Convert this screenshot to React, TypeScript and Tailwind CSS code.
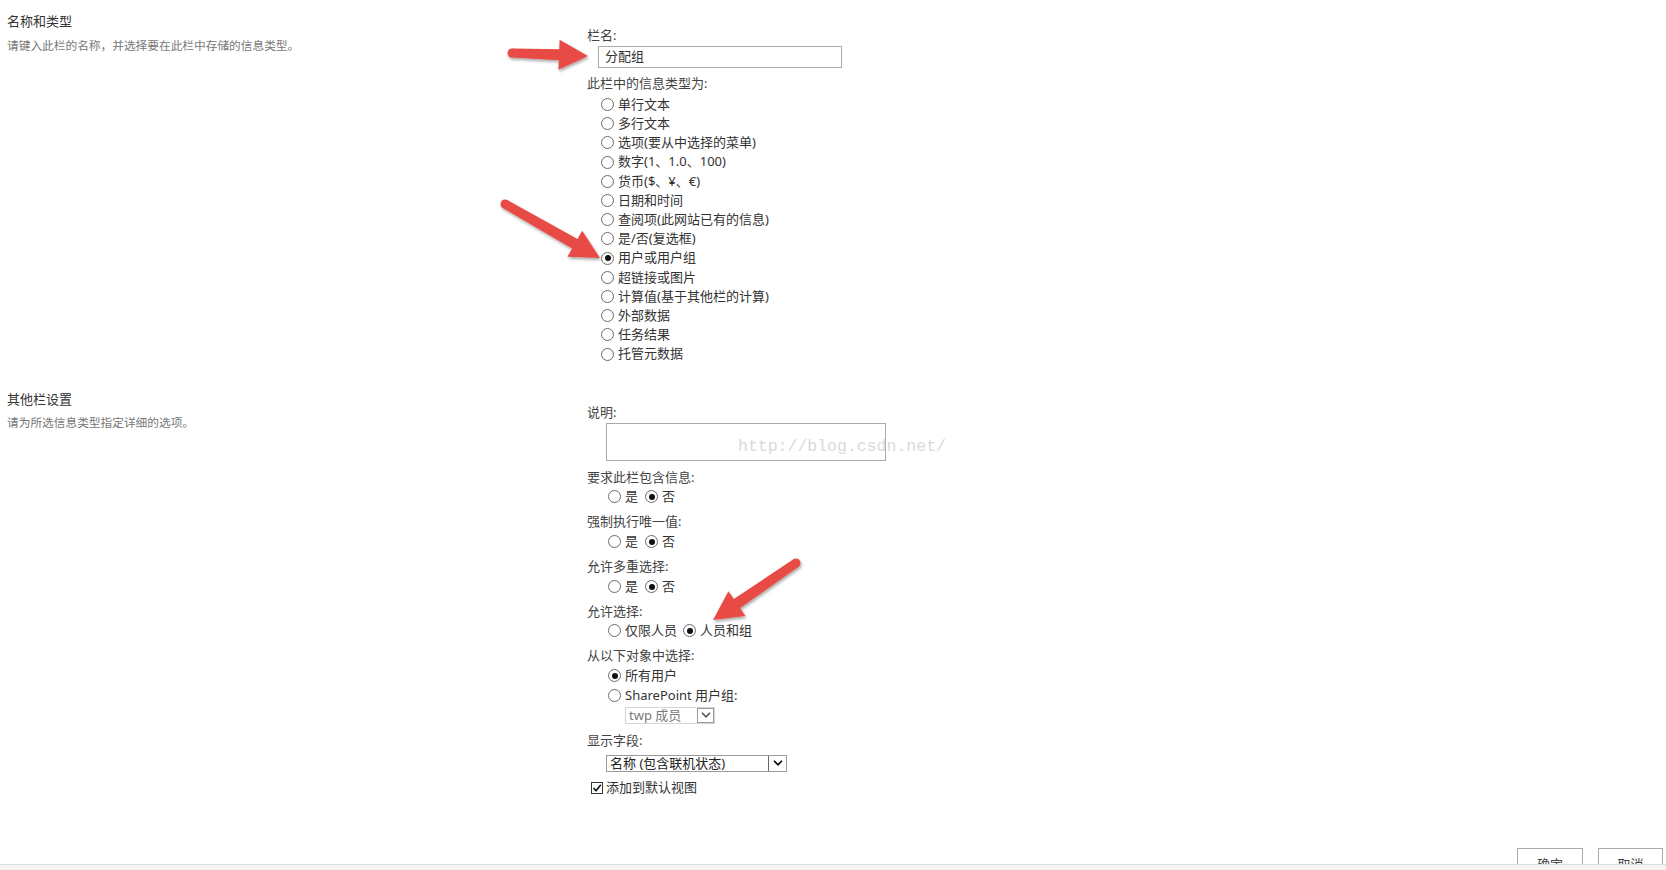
import React from 'react';

const fieldTypes: string[] = [
  '单行文本',
  '多行文本',
  '选项(要从中选择的菜单)',
  '数字(1、1.0、100)',
  '货币($、¥、€)',
  '日期和时间',
  '查阅项(此网站已有的信息)',
  '是/否(复选框)',
  '用户或用户组',
  '超链接或图片',
  '计算值(基于其他栏的计算)',
  '外部数据',
  '任务结果',
  '托管元数据',
];

const Radio = ({checked}: {checked?: boolean}) => (
  <span className="inline-flex h-[13px] w-[13px] shrink-0 items-center justify-center rounded-full border border-[#6b6b6b] bg-white">
    {checked && <span className="h-[6px] w-[6px] rounded-full bg-[#111]" />}
  </span>
);

const Choice = ({label, checked}: {label: string; checked?: boolean}) => (
  <span className="flex items-center gap-[4px]">
    <Radio checked={checked} />
    <span>{label}</span>
  </span>
);

const Chevron = ({color = '#000'}: {color?: string}) => (
  <svg width="10" height="6" viewBox="0 0 10 6">
    <polyline points="1,0.8 5,4.8 9,0.8" fill="none" stroke={color} strokeWidth="1.6" />
  </svg>
);

const Label = ({children, className = ''}: {children: React.ReactNode; className?: string}) => (
  <div className={`h-[18px] leading-[18px] text-[#444] ${className}`}>{children}</div>
);

// red call-out arrow, tail -> tip
const Arrow = ({x1, y1, x2, y2}: {x1: number; y1: number; x2: number; y2: number}) => {
  const len = Math.hypot(x2 - x1, y2 - y1);
  const ux = (x2 - x1) / len;
  const uy = (y2 - y1) / len;
  const px = -uy;
  const py = ux;
  const headL = 29;
  const headW = 15;
  const tailW = 4.5;
  const neckW = 5.5;
  const bx = x2 - ux * headL;
  const by = y2 - uy * headL;
  const pts = [
    [x1 + px * tailW, y1 + py * tailW],
    [bx + px * neckW, by + py * neckW],
    [bx + px * headW, by + py * headW],
    [x2, y2],
    [bx - px * headW, by - py * headW],
    [bx - px * neckW, by - py * neckW],
    [x1 - px * tailW, y1 - py * tailW],
  ]
    .map(p => p.join(','))
    .join(' ');
  return (
    <g filter="url(#arrowShadow)" fill="#e84b45">
      <circle cx={x1} cy={y1} r={tailW} />
      <polygon points={pts} />
    </g>
  );
};

const App = () => {
  return (
    <div className="flex h-[870px] w-[1666px] flex-col overflow-hidden bg-white text-[13px] text-[#333] font-['Noto_Sans','Noto_Sans_CJK_SC',sans-serif]">
      <div className="relative h-[864px] overflow-hidden">
        {/* 名称和类型 */}
        <section className="flex items-start">
          <div className="w-[587px] shrink-0 pl-[7px] pt-[11px]">
            <div className="h-[20px] leading-[20px] text-[#333]">名称和类型</div>
            <div className="mt-[5px] h-[18px] text-[11.7px] leading-[18px] text-[#777]">
              请键入此栏的名称，并选择要在此栏中存储的信息类型。
            </div>
          </div>
          <div className="pt-[26px]">
            <Label>栏名:</Label>
            <div className="ml-[11px] mt-[2px] flex h-[22px] w-[244px] items-center border border-[#ababab] pl-[6px] text-[13px] text-[#333]">
              分配组
            </div>
            <Label className="mt-[6px]">此栏中的信息类型为:</Label>
            <div className="mt-[3px] pl-[14px]">
              {fieldTypes.map(t => (
                <div key={t} className="flex h-[19.2px] items-center gap-[4px]">
                  <Radio checked={t === '用户或用户组'} />
                  <span>{t}</span>
                </div>
              ))}
            </div>
          </div>
        </section>

        {/* 其他栏设置 */}
        <section className="mt-[17px] flex items-start">
          <div className="w-[587px] shrink-0 pl-[7px] pt-[8px]">
            <div className="h-[20px] leading-[20px] text-[#333]">其他栏设置</div>
            <div className="mt-[4px] h-[18px] text-[11.7px] leading-[18px] text-[#777]">
              请为所选信息类型指定详细的选项。
            </div>
          </div>
          <div className="pt-[22px]">
            <Label>说明:</Label>
            <div className="ml-[19px] mt-[2px] h-[38px] w-[280px] border border-[#ababab]" />

            <Label className="mt-[7px]">要求此栏包含信息:</Label>
            <div className="mt-[1px] flex h-[20px] items-center gap-[7px] pl-[21px]">
              <Choice label="是" />
              <Choice label="否" checked />
            </div>

            <Label className="mt-[5px]">强制执行唯一值:</Label>
            <div className="mt-[2px] flex h-[20px] items-center gap-[7px] pl-[21px]">
              <Choice label="是" />
              <Choice label="否" checked />
            </div>

            <Label className="mt-[5px]">允许多重选择:</Label>
            <div className="mt-[2px] flex h-[20px] items-center gap-[7px] pl-[21px]">
              <Choice label="是" />
              <Choice label="否" checked />
            </div>

            <Label className="mt-[5px]">允许选择:</Label>
            <div className="mt-[1px] flex h-[20px] items-center gap-[6px] pl-[21px]">
              <Choice label="仅限人员" />
              <Choice label="人员和组" checked />
            </div>

            <Label className="mt-[5px]">从以下对象中选择:</Label>
            <div className="mt-[2px] flex h-[20px] items-center pl-[21px]">
              <Choice label="所有用户" checked />
            </div>
            <div className="flex h-[20px] items-center pl-[21px]">
              <Choice label="SharePoint 用户组:" />
            </div>
            <div className="ml-[38px] mt-[1px] flex h-[17px] w-[90px] border border-[#d4d4d4]">
              <span className="flex-1 pl-[3px] text-[13px] leading-[15px] text-[#7a7a7a]">twp 成员</span>
              <span className="flex w-[17px] items-center justify-center border border-[#9a9a9a] bg-white">
                <Chevron color="#555" />
              </span>
            </div>

            <Label className="mt-[7px]">显示字段:</Label>
            <div className="ml-[19px] mt-[6px] flex h-[17px] w-[181px] border border-[#9a9a9a]">
              <span className="flex-1 pl-[3px] leading-[15px] text-[#222]">名称 (包含联机状态)</span>
              <span className="flex w-[18px] items-center justify-center border-l border-[#6a6a6a] bg-white">
                <Chevron />
              </span>
            </div>

            <div className="ml-[4px] mt-[6px] flex h-[20px] items-center gap-[3px]">
              <span className="flex h-[12px] w-[12px] items-center justify-center border border-[#333] bg-white">
                <svg width="10" height="10" viewBox="0 0 10 10">
                  <polyline points="1.5,5 4,7.8 8.8,1.8" fill="none" stroke="#111" strokeWidth="1.6" />
                </svg>
              </span>
              <span>添加到默认视图</span>
            </div>
          </div>
        </section>

        <div className="mt-[50px] flex justify-end gap-[15px] pr-[3px]">
          <button className="h-[34px] w-[66px] border border-[#ababab] bg-white text-[13px] text-[#444]">确定</button>
          <button className="h-[34px] w-[65px] border border-[#ababab] bg-white text-[13px] text-[#444]">取消</button>
        </div>

        {/* watermark */}
        <div className="pointer-events-none absolute left-[738px] top-[437px] text-[16.5px] leading-[20px] text-[#dadada] font-['Liberation_Mono',monospace]">
          http://blog.csdn.net/
        </div>

        <svg className="pointer-events-none absolute inset-0 h-full w-full">
          <defs>
            <filter id="arrowShadow" x="-20%" y="-20%" width="140%" height="140%">
              <feDropShadow dx="1" dy="2" stdDeviation="1.8" floodColor="#000" floodOpacity="0.35" />
            </filter>
          </defs>
          <Arrow x1={512} y1={53} x2={588} y2={56} />
          <Arrow x1={505} y1={204} x2={600} y2={258} />
          <Arrow x1={796} y1={563} x2={713} y2={620} />
        </svg>
      </div>
      <div className="h-[6px] border-t border-[#dedede] bg-[#f3f3f3]" />
    </div>
  );
};

export default App;
